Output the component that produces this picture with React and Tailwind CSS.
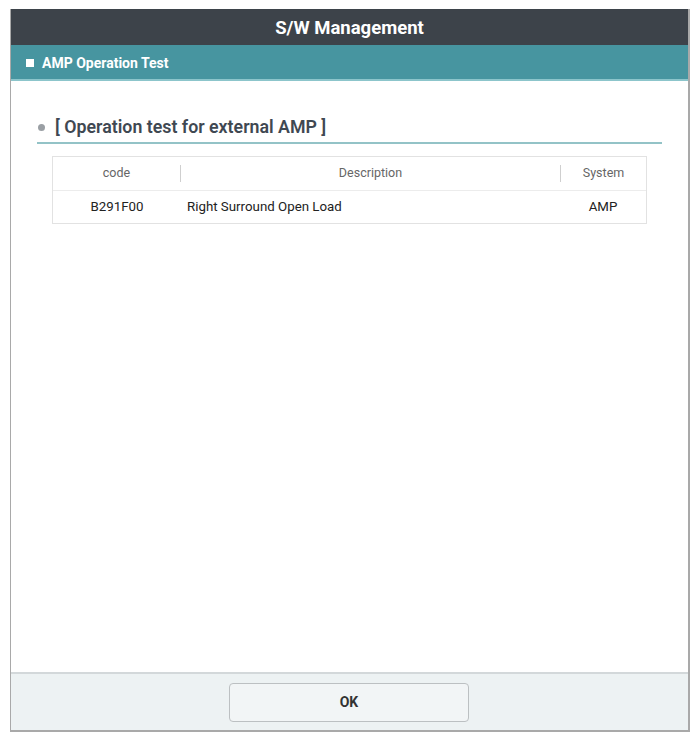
import React from 'react';

const rows = [
  { code: 'B291F00', description: 'Right Surround Open Load', system: 'AMP' },
];

const SwManagement = () => {
  return (
    <div className="min-h-screen bg-white pt-[9px] pl-[10px]" style={{ fontFamily: 'Roboto, "Liberation Sans", sans-serif' }}>
      <div className="flex h-[723px] w-[680px] flex-col border-l border-r-2 border-b-2 border-[#a9a9a9] bg-white">
        {/* Title bar */}
        <div className="flex h-[36px] items-center justify-center bg-[#3d434a] pt-[3px]">
          <h1 className="text-[18.5px] font-bold text-white">S/W Management</h1>
        </div>

        {/* Sub header */}
        <div className="flex h-[36px] items-center gap-[8px] border-b-2 border-[#8cc5cb] bg-[#4795a0] pl-[15px] pt-[2px]">
          <span className="h-[8px] w-[8px] bg-white" />
          <span className="text-[14px] font-bold text-white">AMP Operation Test</span>
        </div>

        {/* Body */}
        <div className="flex-1 px-[26px] pt-[33px]">
          <div className="flex items-center gap-[10px] border-b-2 border-[#93c3c7] pb-[1px] pl-[1px]">
            <span className="h-[7px] w-[7px] rounded-full bg-[#9a9fa4]" />
            <h2 className="text-[17.8px] font-semibold text-[#3f4852]">[ Operation test for external AMP ]</h2>
          </div>

          <div className="mx-[15px] mt-[12px] border border-[#e2e2e2]">
            <div className="flex h-[34px] items-center border-b border-[#ececec] text-[12.5px] text-[#666]">
              <div className="w-[127px] text-center">code</div>
              <div className="h-[17px] w-px bg-[#cfcfcf]" />
              <div className="flex-1 text-center">Description</div>
              <div className="h-[17px] w-px bg-[#cfcfcf]" />
              <div className="w-[85px] text-center">System</div>
            </div>
            {rows.map((row, index) => (
              <div key={index} className="flex h-[32px] items-center text-[13.3px] text-[#222]">
                <div className="w-[128px] text-center">{row.code}</div>
                <div className="flex-1 pl-[6px]">{row.description}</div>
                <div className="w-[86px] text-center">{row.system}</div>
              </div>
            ))}
          </div>
        </div>

        {/* Footer */}
        <div className="flex h-[58px] items-center justify-center border-t-2 border-[#d3d8da] bg-[#edf2f3] pr-[1px] pt-[1px]">
          <button className="h-[39px] w-[240px] rounded-[4px] border border-[#bcc0c2] bg-[#f2f5f6] text-[14px] font-bold text-[#333]">
            OK
          </button>
        </div>
      </div>
    </div>
  );
};

export default SwManagement;
